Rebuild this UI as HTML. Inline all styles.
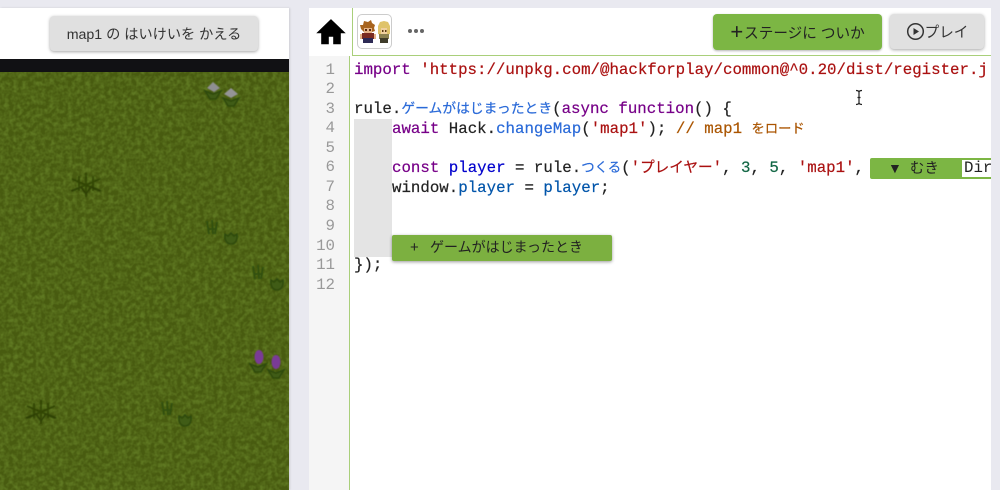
<!DOCTYPE html>
<html><head><meta charset="utf-8">
<style>
html,body{margin:0;padding:0}
body{width:1000px;height:490px;overflow:hidden;background:#e9e9f0;position:relative;font-family:"Liberation Sans","Noto Sans CJK JP",sans-serif}
.a{position:absolute}
.btn{position:absolute;border-radius:4px;display:flex;align-items:center;justify-content:center;font-size:14.2px;color:#333;white-space:pre;filter:blur(.25px)}
.l{position:absolute;left:354px;height:20px;line-height:20px;font-family:"Liberation Mono","Noto Sans CJK JP",monospace;font-size:15.77px;color:#222;white-space:pre;-webkit-text-stroke:.2px;filter:blur(.3px)}
.n{position:absolute;left:309px;width:26px;text-align:right;height:20px;line-height:20px;font-family:"Liberation Mono",monospace;font-size:15.77px;color:#999;filter:blur(.3px)}
.k{color:#770088}.s{color:#aa1111}.b{color:#2a6ad8}.d{color:#0000cc}.v{color:#0055aa}.c{color:#aa5500}.m{color:#116644}
.j{font-family:"Noto Sans CJK JP",sans-serif}
</style></head><body>

<!-- left panel -->
<div class="a" style="left:0;top:8px;width:289px;height:482px;background:#fff;box-shadow:1px 0 2px rgba(0,0,0,.12)"></div>
<div class="btn" style="left:50px;top:16px;width:208px;height:35px;background:#e0e0e0;box-shadow:0 1px 3px rgba(0,0,0,.35)">map1 の はいけいを かえる</div>
<div class="a" style="left:0;top:59px;width:289px;height:13px;background:#111114"></div>

<svg class="a" style="left:0;top:72px" width="289" height="418" viewBox="0 72 289 418">
<defs>
<filter id="g" x="0" y="0" width="100%" height="100%" color-interpolation-filters="sRGB">
<feTurbulence type="fractalNoise" baseFrequency=".22" numOctaves="2" seed="4"/>
<feColorMatrix values="0 0 0 0 .37  0 0 0 0 .47  0 0 0 0 .13  2.200 0 0 0 -.75"/>
</filter>
<filter id="sb" x="-10%" y="-10%" width="120%" height="120%"><feGaussianBlur stdDeviation=".6"/></filter>
<g id="tuft" fill="none" stroke="#2b3f08" stroke-width="1.800" opacity=".8">
<path d="M0 -12L0 12M-14 -6L14 6M14 -6L-14 6M-7 -9L-7 6M7 -9L7 6"/>
<path d="M-15 6L-5 2L0 9L5 2L15 6" stroke="#263808"/>
</g>
<g id="sprout" fill="none" stroke="#33500d" stroke-width="2">
<path d="M-5 -7L-3 6M0 -8L1 6M5 -6L3 6M-4 1L5 1"/>
</g>
<g id="bush" fill="#3f5b12" stroke="#2f4a0b" stroke-width="1.600">
<path d="M-6 -3C-7 5 -3 7 0 7C3 7 7 5 6 -3L3 -1L0 -4L-3 -1Z"/>
</g>
<g id="weed" fill="#3f5b12" stroke="#2f4a0b" stroke-width="1.600">
<path d="M-8 0L-3 8L3 8L8 0L0 3Z"/>
</g>
</defs>
<rect x="0" y="72" width="289" height="418" fill="#485b10"/>
<rect x="0" y="72" width="289" height="418" filter="url(#g)"/>

<g filter="url(#sb)">
<use href="#weed" x="213" y="91"/><use href="#weed" x="231" y="98"/>
<path d="M207 88L213 82L220 88L214 92Z" fill="#8f8f93"/>
<path d="M224 94L231 88L238 94L231 98Z" fill="#949497"/>

<use href="#tuft" x="86" y="185"/>
<use href="#tuft" x="41" y="412"/>
<use href="#sprout" x="212" y="228"/><use href="#bush" x="231" y="237"/>
<use href="#sprout" x="258" y="273"/><use href="#bush" x="277" y="283"/>
<use href="#sprout" x="167" y="409"/><use href="#bush" x="185" y="419"/>

<use href="#weed" x="258" y="364"/><use href="#weed" x="276" y="370"/>
<ellipse cx="259" cy="357" rx="4.500" ry="7" fill="#7a3a96"/>
<ellipse cx="276" cy="362" rx="4.500" ry="7" fill="#7a3a96"/>
</g>
</svg>

<!-- right panel -->
<div class="a" style="left:309px;top:8px;width:682px;height:482px;background:#fff"></div>
<div class="a" style="left:309px;top:56px;width:40px;height:434px;background:#f5f5f5"></div>
<div class="a" style="left:349px;top:56px;width:1px;height:434px;background:#a9cf7a"></div>
<div class="a" style="left:352px;top:8px;width:1px;height:47px;background:#a9cf7a"></div>
<div class="a" style="left:352px;top:55px;width:639px;height:1px;background:#a9cf7a"></div>

<!-- home icon -->
<svg class="a" style="left:316px;top:18px" width="30" height="27" viewBox="0 0 30 27">
<path d="M15 1.500L1 15H5.500V26H12.500V18.500H17.500V26H24.500V15H29Z" fill="#000" stroke="#000" stroke-width=".6"/>
</svg>

<!-- avatar -->
<div class="a" style="left:357px;top:14px;width:35px;height:35px;border:1px solid #ccc;border-radius:5px;background:#fff;box-sizing:border-box"></div>
<svg class="a" style="left:359px;top:20px;filter:blur(.35px)" width="32" height="24" viewBox="0 0 32 24">
<path d="M2 9L1 5L4 5L5 1L9 2L12 0L13 3L16 5L15 8L16 11L13 12H5Z" fill="#a8641e"/>
<rect x="5" y="8" width="8" height="5" fill="#e5b488"/>
<rect x="6" y="9" width="2" height="2" fill="#5a2a10"/><rect x="10" y="9" width="2" height="2" fill="#5a2a10"/>
<rect x="3" y="13" width="12" height="6" fill="#7a2c22"/>
<rect x="1" y="14" width="2" height="5" fill="#e5b488"/><rect x="15" y="14" width="2" height="5" fill="#e5b488"/>
<rect x="4" y="18" width="10" height="5" fill="#2d2a55"/>
<path d="M19 6L21 2L25 1L29 2L31 6L31 14L28 15V9H22V15L19 14Z" fill="#dfc36a"/>
<rect x="22" y="8" width="6" height="6" fill="#efcf9f"/>
<rect x="23" y="10" width="1.500" height="2" fill="#5a3a10"/><rect x="26" y="10" width="1.500" height="2" fill="#5a3a10"/>
<rect x="20" y="14" width="10" height="5" fill="#8b8150"/>
<rect x="21" y="18" width="8" height="5" fill="#3f3c2a"/>
</svg>

<!-- dots -->
<div class="a" style="left:408px;top:29px;width:4px;height:4px;border-radius:50%;background:#666"></div>
<div class="a" style="left:414px;top:29px;width:4px;height:4px;border-radius:50%;background:#666"></div>
<div class="a" style="left:420px;top:29px;width:4px;height:4px;border-radius:50%;background:#666"></div>

<!-- top buttons -->
<div class="btn" style="left:713px;top:14px;width:169px;height:36px;background:#7cb644;box-shadow:0 1px 2px rgba(0,0,0,.3);color:#222;font-size:14.600px"><span style="font-size:22px;line-height:20px;margin-right:1px">+</span>ステージに ついか</div>
<div class="btn" style="left:890px;top:14px;width:94px;height:35px;background:#e0e0e0;box-shadow:0 1px 3px rgba(0,0,0,.35);font-size:14.600px">
<svg width="19" height="19" viewBox="0 0 19 19"><circle cx="9.500" cy="9.500" r="7.800" fill="none" stroke="#333" stroke-width="1.500"/><path d="M7.500 6L13 9.500L7.500 13Z" fill="#333"/></svg>プレイ</div>

<!-- line numbers -->
<div class="n" style="top:60px">1</div>
<div class="n" style="top:79px">2</div>
<div class="n" style="top:99px">3</div>
<div class="n" style="top:118px">4</div>
<div class="n" style="top:138px">5</div>
<div class="n" style="top:157px">6</div>
<div class="n" style="top:177px">7</div>
<div class="n" style="top:196px">8</div>
<div class="n" style="top:216px">9</div>
<div class="n" style="top:236px">10</div>
<div class="n" style="top:255px">11</div>
<div class="n" style="top:275px">12</div>

<!-- indent block -->
<div class="a" style="left:354px;top:119px;width:38px;height:138px;background:#e4e4e4"></div>

<!-- code -->
<div class="l" style="top:60px;width:636px;overflow:hidden"><span class="k">import</span> <span class="s">'https://unpkg.com/@hackforplay/common@^0.20/dist/register.j</span></div>
<div class="l" style="top:97px">rule.<span class="b j" style="font-size:13.8px">ゲームがはじまったとき</span>(<span class="k">async function</span>() {</div>
<div class="l" style="top:118px;left:392px"><span class="k">await</span> Hack.<span class="b">changeMap</span>(<span class="s">'map1'</span>); <span class="c">// map1 <span class="j" style="font-size:13.3px">をロード</span></span></div>
<div class="l" style="top:156px;left:392px"><span class="k">const</span> <span class="d">player</span> = rule.<span class="b j" style="font-size:13.4px">つくる</span>(<span class="s">'<span class="j" style="font-size:14.6px">プレイヤー</span>'</span>, <span class="m">3</span>, <span class="m">5</span>, <span class="s">'map1'</span>,</div>
<div class="l" style="top:178px;left:392px">window.<span class="v">player</span> = <span class="v">player</span>;</div>
<div class="l" style="top:255px">});</div>

<!-- direction widget -->
<div class="a" style="left:870px;top:158px;width:121px;height:21px;background:#7cb644;border-radius:2px 0 0 2px;overflow:hidden">
<div class="a" style="left:18px;top:0;height:21px;line-height:21px;font-size:14.5px;color:#222;white-space:pre;filter:blur(.25px)"><span style="font-size:14px">▼</span>&nbsp; むき</div>
<div class="a" style="left:92px;top:2px;width:29px;height:17px;background:#fff;line-height:17px;font-family:'Liberation Mono',monospace;font-size:15.77px;color:#222;padding-left:2px;box-sizing:border-box;white-space:pre;overflow:hidden">Dir</div>
</div>

<!-- add button -->
<div class="a" style="left:392px;top:235px;width:220px;height:26px;background:#7cb040;border-radius:2px;box-shadow:0 1px 3px rgba(0,0,0,.4)">
<span class="a" style="left:18px;top:0;line-height:25px;font-size:15px;color:#222">+</span>
<span class="a" style="left:38px;top:0;line-height:25px;font-size:14px;color:#222;white-space:pre;filter:blur(.25px)">ゲームがはじまったとき</span>
</div>

<!-- I-beam cursor -->
<svg class="a" style="left:854px;top:89px" width="10" height="17" viewBox="0 0 10 17">
<path d="M2 1.500C4 1.500 5 2 5 3.500V13.500C5 15 4 15.500 2 15.500M8 1.500C6 1.500 5 2 5 3.500M5 13.500C5 15 6 15.500 8 15.500M3.500 8.500H6.500" fill="none" stroke="#222" stroke-width="1.200"/>
</svg>

</body></html>
